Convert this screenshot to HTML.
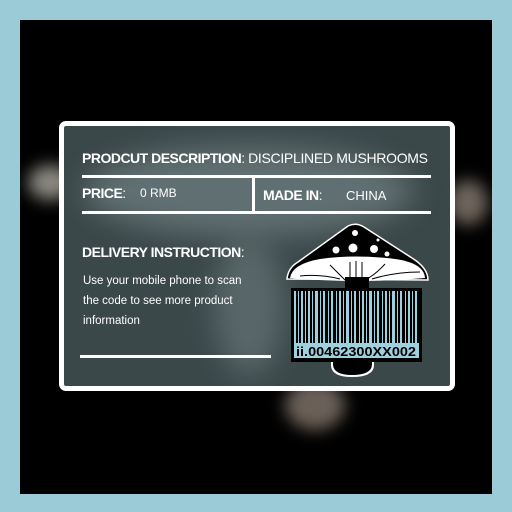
<!DOCTYPE html>
<html><head><style>
html,body{margin:0;padding:0;width:512px;height:512px;overflow:hidden;background:#9bcbd6;}
.blk{position:absolute;left:20px;top:20px;width:472px;height:474px;background:#000;overflow:hidden;}
.blob{position:absolute;border-radius:50%;filter:blur(8px);}
.card{position:absolute;left:59px;top:121px;width:386px;height:260px;border:5px solid #fff;border-radius:7px;background:#3b484a;overflow:hidden;}
.in{position:absolute;left:0;top:0;width:386px;height:260px;}
.t{position:absolute;color:#fff;font-family:"Liberation Sans",sans-serif;white-space:nowrap;}
.b{font-weight:bold;font-size:14px;letter-spacing:-0.5px;}
.r{font-size:13px;}
.hl{position:absolute;background:#fff;height:3px;}
</style></head><body>
<div class="blk">
  <div class="blob" style="left:8px;top:145px;width:45px;height:35px;background:#8a8880;"></div>
  <div class="blob" style="left:428px;top:160px;width:40px;height:45px;background:#6e645c;"></div>
  <div class="blob" style="left:265px;top:360px;width:60px;height:50px;background:#6a6058;"></div>
</div>
<div class="card">
  <div class="blob" style="left:20px;top:20px;width:330px;height:90px;background:#7a8a8c;opacity:.6;filter:blur(14px);"></div>
  <div class="blob" style="left:150px;top:110px;width:70px;height:140px;background:#657476;opacity:.7;filter:blur(14px);"></div>
  <div class="in">
    <div class="t b" style="left:18px;top:24px;">PRODCUT DESCRIPTION<span style="font-weight:normal">:</span> <span style="font-weight:normal;letter-spacing:-0.3px">DISCIPLINED MUSHROOMS</span></div>
    <div class="hl" style="left:18px;top:49px;width:349px;"></div>
    <div class="hl" style="left:188px;top:51px;width:3px;height:34px;"></div>
    <div class="t b" style="left:18px;top:59px;">PRICE<span style="font-weight:normal">:</span></div>
    <div class="t r" style="left:76px;top:60px;font-size:12px;">0 RMB</div>
    <div class="t b" style="left:199px;top:61px;">MADE IN<span style="font-weight:normal">:</span></div>
    <div class="t r" style="left:282px;top:62px;">CHINA</div>
    <div class="hl" style="left:18px;top:85px;width:349px;"></div>
    <div class="t b" style="left:18px;top:118px;">DELIVERY INSTRUCTION<span style="font-weight:normal">:</span></div>
    <div class="t" style="left:19px;top:145px;font-size:11.5px;line-height:20px;">Use your mobile phone to scan<br>the code to see more product<br>information</div>
    <div class="hl" style="left:16px;top:229px;width:191px;"></div>
  </div>
</div>
<svg style="position:absolute;left:0;top:0" width="512" height="512">
  <path d="M331 355 L331 366 Q332 377 352 377 Q373 377 374 366 L374 355 Z" fill="#fff"/>
  <path d="M333 355 L333 365 Q334 375 352 375 Q371 375 372 365 L372 355 Z" fill="#000"/>
  <path d="M287 279 Q288 268 298 262 L348 226 Q356 222 364 227 L412 258 Q428 268 428 280 Z" fill="#000" stroke="#fff" stroke-width="1.5"/>
  <path d="M290 278 Q292 264 320 259 Q355 254 395 259 Q424 263 425 278 Q360 284 290 278 Z" fill="#fff"/>
  <g fill="#fff"><circle cx="355" cy="233" r="3"/><circle cx="336" cy="250" r="3.5"/><circle cx="353" cy="248" r="4.5"/><circle cx="374" cy="249" r="4"/><circle cx="387" cy="254" r="2.5"/><circle cx="378" cy="240" r="1.5"/></g>
  <g stroke="#000" stroke-width="1" fill="none"><path d="M330 265 Q340 275 345 280"/><path d="M350 262 L350 278"/><path d="M356 261 L356 278"/><path d="M362 262 L362 278"/><path d="M385 264 Q375 275 365 280"/><path d="M300 276 Q320 274 340 279"/><path d="M420 272 Q395 272 372 279"/></g>
  <rect x="345" y="277" width="24" height="12" fill="#000"/>
  <rect x="291" y="288" width="131" height="74" fill="#000"/>
  <g fill="#9fd0dd">
    <rect x="294" y="291" width="2" height="52"/><rect x="298" y="291" width="1" height="52"/><rect x="301" y="291" width="2" height="52"/><rect x="305" y="291" width="1" height="52"/><rect x="308" y="291" width="2" height="52"/><rect x="312" y="291" width="1" height="52"/><rect x="315" y="291" width="3" height="52"/><rect x="320" y="291" width="1" height="52"/><rect x="323" y="291" width="2" height="52"/><rect x="328" y="291" width="1" height="52"/><rect x="331" y="291" width="2" height="52"/><rect x="336" y="291" width="1" height="52"/><rect x="339" y="291" width="2" height="52"/><rect x="343" y="291" width="1" height="52"/><rect x="346" y="291" width="3" height="52"/><rect x="351" y="291" width="1" height="52"/><rect x="354" y="291" width="2" height="52"/><rect x="359" y="291" width="1" height="52"/><rect x="362" y="291" width="2" height="52"/><rect x="366" y="291" width="1" height="52"/><rect x="369" y="291" width="3" height="52"/><rect x="374" y="291" width="1" height="52"/><rect x="377" y="291" width="2" height="52"/><rect x="382" y="291" width="1" height="52"/><rect x="385" y="291" width="2" height="52"/><rect x="389" y="291" width="1" height="52"/><rect x="392" y="291" width="3" height="52"/><rect x="397" y="291" width="1" height="52"/><rect x="400" y="291" width="2" height="52"/><rect x="405" y="291" width="1" height="52"/><rect x="408" y="291" width="2" height="52"/><rect x="412" y="291" width="1" height="52"/><rect x="415" y="291" width="2" height="52"/>
    <rect x="294" y="343" width="125" height="15"/>
  </g>
  <text x="296" y="356" font-family="Liberation Sans,sans-serif" font-weight="bold" font-size="12.5" fill="#000" textLength="120" lengthAdjust="spacingAndGlyphs">ii.00462300XX002</text>
</svg>
</body></html>
